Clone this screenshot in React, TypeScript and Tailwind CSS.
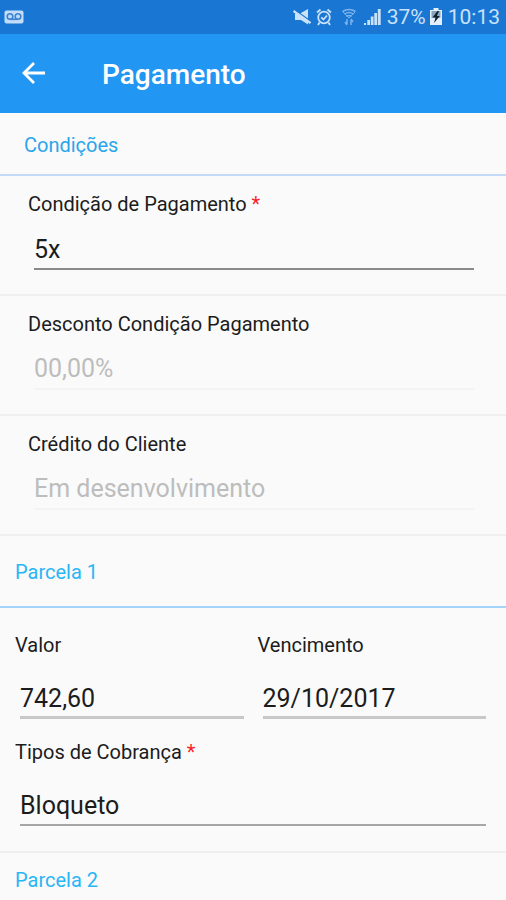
import { useState } from "react";

const fieldBase =
  "block w-full appearance-none rounded-none bg-transparent px-0 pb-0 text-[25px] leading-8 text-[#1c1c1c] outline-none";

function Label({ htmlFor, text, required }: { htmlFor: string; text: string; required?: boolean }) {
  return (
    <label htmlFor={htmlFor} className="block text-[20px] leading-6 text-[#1c1c1c]">
      {text}
      {required && <span className="text-[#fa1e28]"> *</span>}
    </label>
  );
}

function StatusBar() {
  return (
    <div className="flex h-[34px] items-center justify-between bg-[#1976d2] pr-[6px] pl-1 text-[#c9e2fb]">
      <svg className="h-[14px] w-5" viewBox="0 0 20 14" fill="none">
        <rect x="0.5" y="0.5" width="19" height="13" rx="2" fill="#c3dcf7" />
        <g stroke="#3c84d2" strokeWidth="1.6">
          <circle cx="6" cy="6.5" r="2.8" />
          <circle cx="14" cy="6.5" r="2.8" />
          <path d="M6 9.3h8" />
        </g>
      </svg>
      <div className="flex items-center">
        <svg className="h-[18px] w-[18px]" viewBox="0 0 18 18" fill="currentColor">
          <path d="M2 5.500h5L15 1v15.500L8 12H2z" />
          <path d="M1 1.500L18 13.500" stroke="#1976d2" strokeWidth="1.500" />
          <path d="M0.500 3L17.500 15" stroke="currentColor" strokeWidth="2.200" />
        </svg>
        <svg className="ml-[5px] h-[18px] w-4" viewBox="0 0 16 18" fill="none" stroke="currentColor" strokeWidth="1.8">
          <circle cx="8" cy="9.500" r="5.800" />
          <path d="M1 4.500L4.500 1.500M15 4.500L11.500 1.500M3.500 14.500L2 17M12.500 14.500L14 17M5.200 9.300L7.500 11.500L11 7.500" />
        </svg>
        <svg className="ml-[9px] h-[18px] w-4" viewBox="0 0 16 18" fill="none" stroke="#7db3ec" strokeWidth="1.500">
          <path d="M1.500 3.500Q8-.5 14.500 3.500M3.500 6Q8 3 12.500 6M5.500 8.500Q8 6.500 10.500 8.500" />
          <path d="M2 4L8 10L14 4" strokeWidth="1" />
          <path d="M6 11v5M4 14l2 3M10 17v-5M12 14l-2-3" />
        </svg>
        <svg className="ml-[7px] h-[18px] w-[17px]" viewBox="0 0 17 18" fill="currentColor">
          <path d="M0 15h2v2H0zM3.300 12h2.700v5H3.300zM6.800 8.500h2.700V17H6.800zM10.300 5h2.700v12h-2.700zM13.800 1h2.900v16h-2.900z" />
        </svg>
        <span className="ml-[6px] text-[21px] leading-6">37%</span>
        <svg className="ml-1 h-[18px] w-3" viewBox="0 0 12 18">
          <path d="M3.500 0h5v2H12v15H0V2h3.500z" fill="#e3effb" />
          <path d="M1.500 3h9v7h-9z" fill="#8aa5bd" />
          <path d="M7.500 3L2.500 9.500H5.500L4 15L9.800 8H6.800L9 3z" fill="#10202c" />
        </svg>
        <span className="ml-[6px] text-[21px] leading-6">10:13</span>
      </div>
    </div>
  );
}

function Row({ children }: { children: React.ReactNode }) {
  return <div className="border-b-2 border-[#efefef] pt-4 pr-8 pb-6 pl-7">{children}</div>;
}

export default function App() {
  const [condicao, setCondicao] = useState("5x");
  const [tipo, setTipo] = useState("Bloqueto");

  return (
    <div className="min-h-screen bg-[#fafafa] font-['Roboto','Noto_Sans',sans-serif]">
      <StatusBar />
      <header className="flex h-[79px] items-center bg-[#2196f3] pl-[18px] text-white">
        <button type="button" aria-label="Voltar" className="flex h-8 w-8 items-center justify-center">
          <svg className="h-6 w-6" viewBox="0 0 24 24" fill="none" stroke="currentColor" strokeWidth="2.800">
            <path d="M23 11H2M12 1L2 11L12 21" />
          </svg>
        </button>
        <h1 className="ml-[52px] pt-[3px] text-[28px] leading-8 font-medium">Pagamento</h1>
      </header>

      <main>
        <h2 className="border-b-2 border-[#c3d9f7] pt-5 pr-6 pb-[17px] pl-6 text-[20px] leading-6 text-[#2ba5ea]">
          Condições
        </h2>
        <Row>
          <Label htmlFor="condicao" text="Condição de Pagamento" required />
          <div className="mt-3 pl-[6px]">
            <select
              id="condicao"
              value={condicao}
              onChange={(e) => setCondicao(e.target.value)}
              className={`${fieldBase} h-[42px] border-b-2 border-[#8a8a8a] pt-1`}
            >
              <option>5x</option>
            </select>
          </div>
        </Row>
        <Row>
          <Label htmlFor="desconto" text="Desconto Condição Pagamento" />
          <div className="mt-3 pl-[6px]">
            <input
              id="desconto"
              disabled
              placeholder="00,00%"
              className={`${fieldBase} h-[42px] border-b-2 border-[#f4f4f4] pt-0 placeholder:text-[#bdbdbd]`}
            />
          </div>
        </Row>
        <Row>
          <Label htmlFor="credito" text="Crédito do Cliente" />
          <div className="mt-3 pl-[6px]">
            <input
              id="credito"
              disabled
              placeholder="Em desenvolvimento"
              className={`${fieldBase} h-[42px] border-b-2 border-[#f4f4f4] pt-0 placeholder:text-[#bdbdbd]`}
            />
          </div>
        </Row>

        <h2 className="border-b-2 border-[#a3d5fa] px-[15px] pt-6 pb-[22px] text-[20px] leading-6 text-[#29b6f6]">
          Parcela 1
        </h2>
        <div className="border-b-2 border-[#efefef] px-[15px] pt-[25px] pb-[25px]">
          <div className="grid grid-cols-2 gap-[9px]">
            <div>
              <Label htmlFor="valor" text="Valor" />
              <div className="mt-5 px-[5px]">
                <input
                  id="valor"
                  defaultValue="742,60"
                  className={`${fieldBase} h-[42px] border-b-3 border-[#c8c8c8] pt-1`}
                />
              </div>
            </div>
            <div>
              <Label htmlFor="vencimento" text="Vencimento" />
              <div className="mt-5 px-[5px]">
                <input
                  id="vencimento"
                  defaultValue="29/10/2017"
                  className={`${fieldBase} h-[42px] border-b-3 border-[#c8c8c8] pt-1`}
                />
              </div>
            </div>
          </div>
          <div className="mt-[21px]">
            <Label htmlFor="tipo" text="Tipos de Cobrança" required />
            <div className="mt-5 px-[5px]">
              <select
                id="tipo"
                value={tipo}
                onChange={(e) => setTipo(e.target.value)}
                className={`${fieldBase} h-[42px] border-b-2 border-[#a6a6a6] pt-1`}
              >
                <option>Bloqueto</option>
              </select>
            </div>
          </div>
        </div>

        <h2 className="px-[15px] pt-[15px] text-[20px] leading-6 text-[#29b6f6]">Parcela 2</h2>
      </main>
    </div>
  );
}
